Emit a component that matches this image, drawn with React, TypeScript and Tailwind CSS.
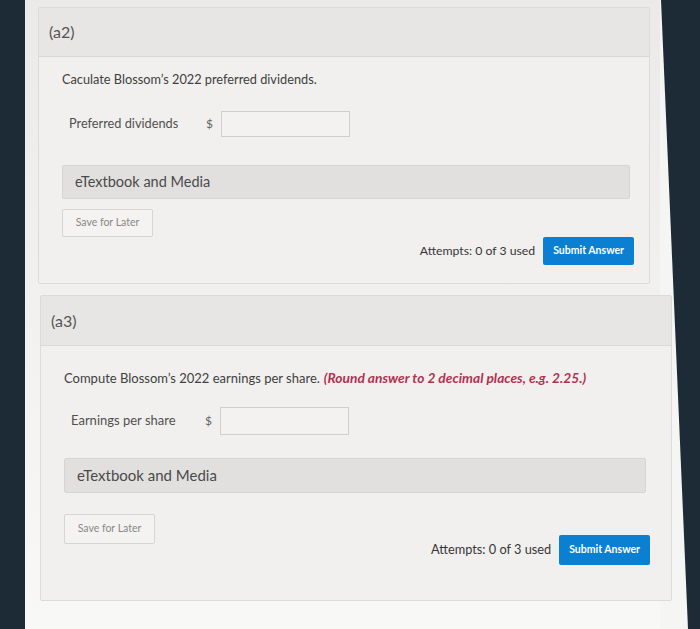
import React from 'react';

const font = { fontFamily: 'Lato, "Open Sans", sans-serif' };

type Spacing = {
  q: string;
  qSize: string;
  row: string;
  label: string;
  input: string;
  bar: string;
  barH: string;
  barText: string;
  save: string;
  saveH: string;
  submit: string;
  btnH: string;
  attempts: string;
  bottom: string;
  barW: string;
  inRight: string;
};

function Part({
  label,
  question,
  hint,
  field,
  width,
  headerH,
  s,
}: {
  label: string;
  question: string;
  hint?: string;
  field: string;
  width: string;
  headerH: string;
  s: Spacing;
}) {
  return (
    <section className={`${width} border border-[#dcdbd8] bg-[#f1f0ee] rounded-[2px]`}>
      <div className={`${headerH} bg-[#e7e6e4] border-b border-[#d9d8d5] flex items-center pl-[10px] text-[16px] text-[#555]`}>
        {label}
      </div>
      <div className="pl-[23px]">
        <p className={`${s.q} ${s.qSize} text-[#404040] leading-[18px]`}>
          {question}
          {hint && (
            <span className="ml-1 text-[13.75px] font-bold italic text-[#b3304e]">{hint}</span>
          )}
        </p>
        <div className={`${s.row} flex items-center pl-[7px]`}>
          <span className={`${s.label} text-[#505050]`}>{field}</span>
          <span className="w-[15px] text-[12px] text-[#666]">$</span>
          <div className={`${s.input} w-[129px] border border-[#d0cfcc] bg-[#f3f2f0]`} />
        </div>
        <div className={`${s.bar} ${s.barW} ${s.barH} ${s.barText} bg-[#e1e0de] border border-[#d6d5d2] rounded-[2px] flex items-center pl-[12px] text-[#4a4a4a]`}>
          eTextbook and Media
        </div>
        <div className={`${s.save} ${s.saveH} w-[91px] border border-[#d6d5d2] bg-[#f4f3f1] rounded-[2px] flex items-center justify-center text-[10.5px] text-[#888]`}>
          Save for Later
        </div>
        <div className={`${s.submit} ${s.inRight} flex items-center justify-end gap-[8px]`}>
          <span className={`${s.attempts} text-[#363636]`}>Attempts: 0 of 3 used</span>
          <button className={`${s.btnH} px-[10px] bg-[#0b80d2] rounded-[2px] text-white font-bold text-[10.5px]`}>
            Submit Answer
          </button>
        </div>
        <div className={s.bottom} />
      </div>
    </section>
  );
}

export default function App() {
  return (
    <div className="w-[700px] h-[629px] flex overflow-hidden" style={font}>
      <div className="w-[25px] shrink-0 bg-[#1d2b37]" />
      <main className="flex-1 min-w-0 bg-gradient-to-b from-[#eceae8] to-[#f8f8f6] pt-[7px]">
        <div className="ml-[13px]">
          <Part
            label="(a2)"
            question="Caculate Blossom’s 2022 preferred dividends."
            field="Preferred dividends"
            width="w-[612px]"
            headerH="h-[49px]"
            s={{
              q: 'mt-[13px]',
              qSize: 'text-[12.75px]',
              row: 'mt-[23px]',
              label: 'w-[137px] text-[12.75px]',
              input: 'h-[26px]',
              bar: 'mt-[28px]',
              barH: 'h-[34px]',
              barText: 'text-[14.5px]',
              save: 'mt-[10px]',
              saveH: 'h-[28px]',
              submit: 'mt-0',
              btnH: 'h-[28px]',
              attempts: 'text-[12.25px]',
              bottom: 'h-[18px]',
              barW: 'w-[568px]',
              inRight: 'w-[572px]',
            }}
          />
        </div>
        <div className="ml-[15px] mt-[11px] relative z-10">
          <Part
            label="(a3)"
            question="Compute Blossom’s 2022 earnings per share."
            hint="(Round answer to 2 decimal places, e.g. 2.25.)"
            field="Earnings per share"
            width="w-[632px]"
            headerH="h-[50px]"
            s={{
              q: 'mt-[23px]',
              qSize: 'text-[13px]',
              row: 'mt-[20px]',
              label: 'w-[134px] text-[13px]',
              input: 'h-[28px]',
              bar: 'mt-[23px]',
              barH: 'h-[35px]',
              barText: 'text-[15px]',
              save: 'mt-[21px]',
              saveH: 'h-[30px]',
              submit: '-mt-[9px]',
              btnH: 'h-[30px]',
              attempts: 'text-[12.75px]',
              bottom: 'h-[35px]',
              barW: 'w-[582px]',
              inRight: 'w-[586px]',
            }}
          />
        </div>
      </main>
      <div className="w-[40px] shrink-0 bg-[#1d2b37]">
        <svg width="40" height="629" viewBox="0 0 40 629" className="block">
          <polygon points="0,0 1,0 28,629 0,629" fill="#f5f5f3" />
        </svg>
      </div>
    </div>
  );
}
